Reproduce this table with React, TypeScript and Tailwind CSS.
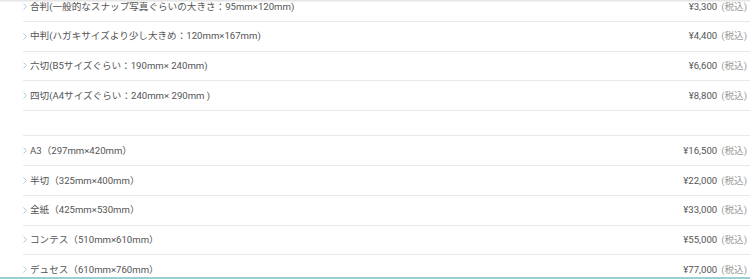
const rows = [
  { label: "合判(一般的なスナップ写真ぐらいの大きさ：95mm×120mm)", price: "¥3,300" },
  { label: "中判(ハガキサイズより少し大きめ：120mm×167mm)", price: "¥4,400" },
  { label: "六切(B5サイズぐらい：190mm× 240mm)", price: "¥6,600" },
  { label: "四切(A4サイズぐらい：240mm× 290mm )", price: "¥8,800" },
  null,
  { label: "A3（297mm×420mm）", price: "¥16,500" },
  { label: "半切（325mm×400mm）", price: "¥22,000" },
  { label: "全紙（425mm×530mm）", price: "¥33,000" },
  { label: "コンテス（510mm×610mm）", price: "¥55,000" },
  { label: "デュセス（610mm×760mm）", price: "¥77,000" },
];

function Chevron() {
  return (
    <svg width="4" height="7" viewBox="0 0 4 7" className="shrink-0 mr-[3px]">
      <polyline points="0.5,0.5 3.5,3.5 0.5,6.5" fill="none" stroke="#b1ccd1" strokeWidth="1" />
    </svg>
  );
}

export default function App() {
  return (
    <div className="relative h-[279px] w-[750px] overflow-hidden bg-white font-['Roboto','Noto_Sans_CJK_JP',sans-serif] text-[#555]">
      {/* shadow from the header above */}
      <div className="absolute inset-x-0 top-0 z-10 h-[2px] bg-gradient-to-b from-[#e2e2e2] to-[#f6f6f6]" />

      <ul className="-mt-[8px] pl-[23px]">
        {rows.map((row, i) =>
          row ? (
            <li
              key={i}
              className="flex h-[29.8px] items-center justify-between border-b border-[#e9e9e9] pr-[3px] text-[9.6px] leading-none"
            >
              <div className="flex items-center">
                <Chevron />
                <span>{row.label}</span>
              </div>
              <div className="flex items-center">
                <span>{row.price}</span>
                <span className="ml-[4px] text-[#9a9a9a]">(税込)</span>
              </div>
            </li>
          ) : (
            <li key={i} className="h-[25px] border-b border-[#e9e9e9]" />
          )
        )}
      </ul>

      {/* teal edge of the next section */}
      <div className="absolute inset-x-0 bottom-0 h-[2px] bg-[#9ccfd5]" />
    </div>
  );
}
